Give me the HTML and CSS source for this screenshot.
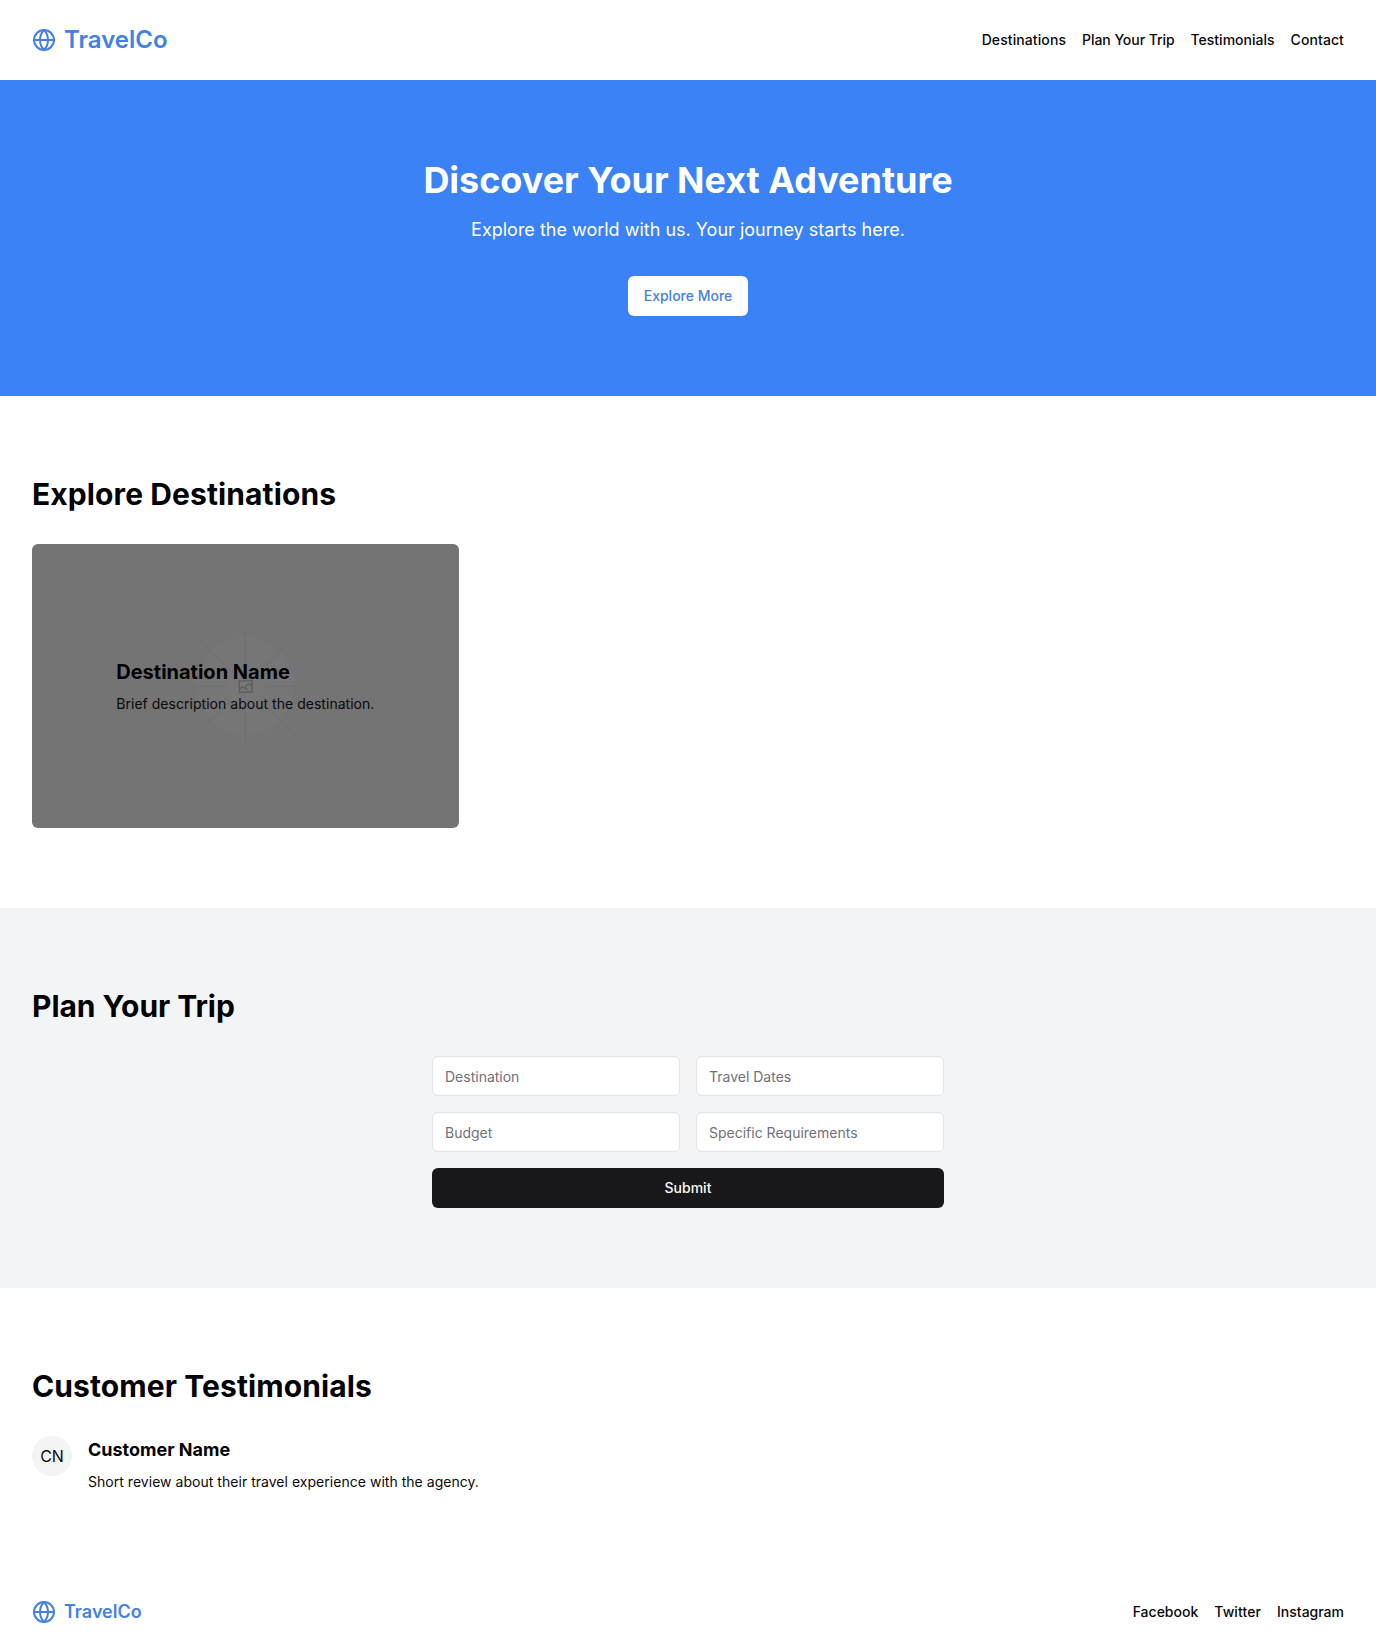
FILE: index.html
```html
<!DOCTYPE html>
<html lang="en">
<head>
<meta charset="utf-8">
<title>TravelCo</title>
<link rel="stylesheet" href="styles.css">
</head>
<body>
<header class="bar">
  <a class="brand" href="#">
    <svg class="globe" viewBox="0 0 24 24"><circle cx="12" cy="12" r="10"/><path d="M12 2a14.5 14.5 0 0 0 0 20 14.5 14.5 0 0 0 0-20"/><path d="M2 12h20"/></svg>
    <span class="brand-name">TravelCo</span>
  </a>
  <nav class="links">
    <a class="loose" href="#destinations">Destinations</a>
    <a class="snug" href="#plan">Plan Your Trip</a>
    <a href="#testimonials">Testimonials</a>
    <a class="loose" href="#contact">Contact</a>
  </nav>
</header>
<main>
  <section class="hero">
    <h1>Discover Your Next Adventure</h1>
    <p>Explore the world with us. Your journey starts here.</p>
    <button class="button button-light">Explore More</button>
  </section>
  <section class="section" id="destinations">
    <h2 class="loose">Explore Destinations</h2>
    <div class="grid">
      <article class="card">
        <svg class="placeholder" viewBox="0 0 1200 800">
          <rect width="1200" height="800" fill="#e8e8e8"/>
          <circle cx="600" cy="400" r="137" fill="#ececec"/>
          <g stroke="#e3e3e3" stroke-width="4">
            <path d="M600 238V562M452 400H748M458 258L742 542M742 258L458 542"/>
          </g>
          <circle cx="600" cy="400" r="56" fill="#efefef"/>
          <g fill="none" stroke="#bcbcbc" stroke-width="4">
            <path d="M583 385H619V417H583ZM583 408L592 402L600 406C605 390 613 390 619 402"/>
            <path d="M600 406L606 410"/>
          </g>
        </svg>
        <div class="overlay">
          <div>
            <h3>Destination Name</h3>
            <p>Brief description about the destination.</p>
          </div>
        </div>
      </article>
    </div>
  </section>
  <section class="section muted" id="plan">
    <h2 class="snug">Plan Your Trip</h2>
    <form class="form">
      <input class="field" placeholder="Destination">
      <input class="field" placeholder="Travel Dates">
      <input class="field" placeholder="Budget">
      <input class="field" placeholder="Specific Requirements">
      <button class="button button-dark" type="button">Submit</button>
    </form>
  </section>
  <section class="section" id="testimonials">
    <h2 class="loose">Customer Testimonials</h2>
    <article class="review">
      <span class="avatar">CN</span>
      <div>
        <h4>Customer Name</h4>
        <p>Short review about their travel experience with the agency.</p>
      </div>
    </article>
  </section>
</main>
<footer class="bar bar-footer" id="contact">
  <a class="brand" href="#">
    <svg class="globe" viewBox="0 0 24 24"><circle cx="12" cy="12" r="10"/><path d="M12 2a14.5 14.5 0 0 0 0 20 14.5 14.5 0 0 0 0-20"/><path d="M2 12h20"/></svg>
    <span class="brand-name">TravelCo</span>
  </a>
  <nav class="links">
    <a href="#">Facebook</a>
    <a class="loose" href="#">Twitter</a>
    <a href="#">Instagram</a>
  </nav>
</footer>
</body>
</html>
```
FILE: styles.css
```css
*, *::before, *::after { box-sizing: border-box; }
body {
  margin: 0;
  background: #fff;
  color: #09090b;
  font: 16px/24px Inter, sans-serif;
}
h1, h2, h3, h4, p { margin: 0; }
h1, h2, h3, h4 { font-weight: 700; color: #020204; }
a { color: inherit; text-decoration: none; }
button, input { font-family: inherit; }
.loose { letter-spacing: 0.1px; }
.snug { letter-spacing: -0.06px; }

.bar {
  height: 80px;
  padding: 0 32px;
  display: flex;
  align-items: center;
  justify-content: space-between;
}
.brand { display: flex; align-items: center; gap: 8px; color: #4381e2; }
.brand-name { font-size: 24px; line-height: 32px; font-weight: 600; }
.bar-footer .brand-name { font-size: 18px; line-height: 28px; }
.globe { width: 24px; height: 24px; fill: none; stroke: currentColor; stroke-width: 2; }
.links { display: flex; gap: 16px; font-size: 14px; line-height: 20px; font-weight: 500; }

.hero {
  padding: 80px 32px;
  display: flex;
  flex-direction: column;
  align-items: center;
  background: #3b82f6;
  color: #fff;
}
.hero h1 { font-size: 36px; line-height: 40px; letter-spacing: -0.035px; color: inherit; }
.hero p { margin: 16px 0 32px; font-size: 18px; line-height: 28px; }

.button {
  height: 40px;
  padding: 0 16px 2px;
  border: 0;
  border-radius: 6px;
  font-size: 14px;
  font-weight: 500;
}
.button-light { background: #fff; color: #4381e2; }
.button-dark { grid-column: 1 / -1; background: #18181b; color: #fafafa; }

.section { padding: 80px 32px; }
.section h2 { margin-bottom: 32px; font-size: 30px; line-height: 36px; }
.muted { background: #f2f4f6; }

.grid { display: grid; grid-template-columns: repeat(3, 1fr); gap: 16px; }
.card { position: relative; overflow: hidden; border-radius: 6px; }
.placeholder { display: block; width: 100%; }
.overlay {
  position: absolute;
  inset: 0;
  display: flex;
  align-items: center;
  justify-content: center;
  background: rgb(0 0 0 / 50%);
}
.overlay h3 { font-size: 20px; line-height: 28px; }
.overlay p, .review p { margin-top: 8px; font-size: 14px; line-height: 20px; letter-spacing: 0.03px; }

.form { width: 512px; margin: 0 auto; display: grid; grid-template-columns: 1fr 1fr; gap: 16px; }
.field {
  width: 100%;
  height: 40px;
  padding: 8px 12px;
  border: 1px solid #e4e4e7;
  border-radius: 6px;
  background: #fff;
  font-size: 14px;
  line-height: 20px;
}
.field::placeholder { color: #71717a; }

.review { display: flex; align-items: flex-start; gap: 16px; }
.avatar {
  width: 40px;
  height: 40px;
  display: flex;
  align-items: center;
  justify-content: center;
  border-radius: 50%;
  background: #f4f4f5;
}
.review h4 { font-size: 18px; line-height: 28px; }
```
